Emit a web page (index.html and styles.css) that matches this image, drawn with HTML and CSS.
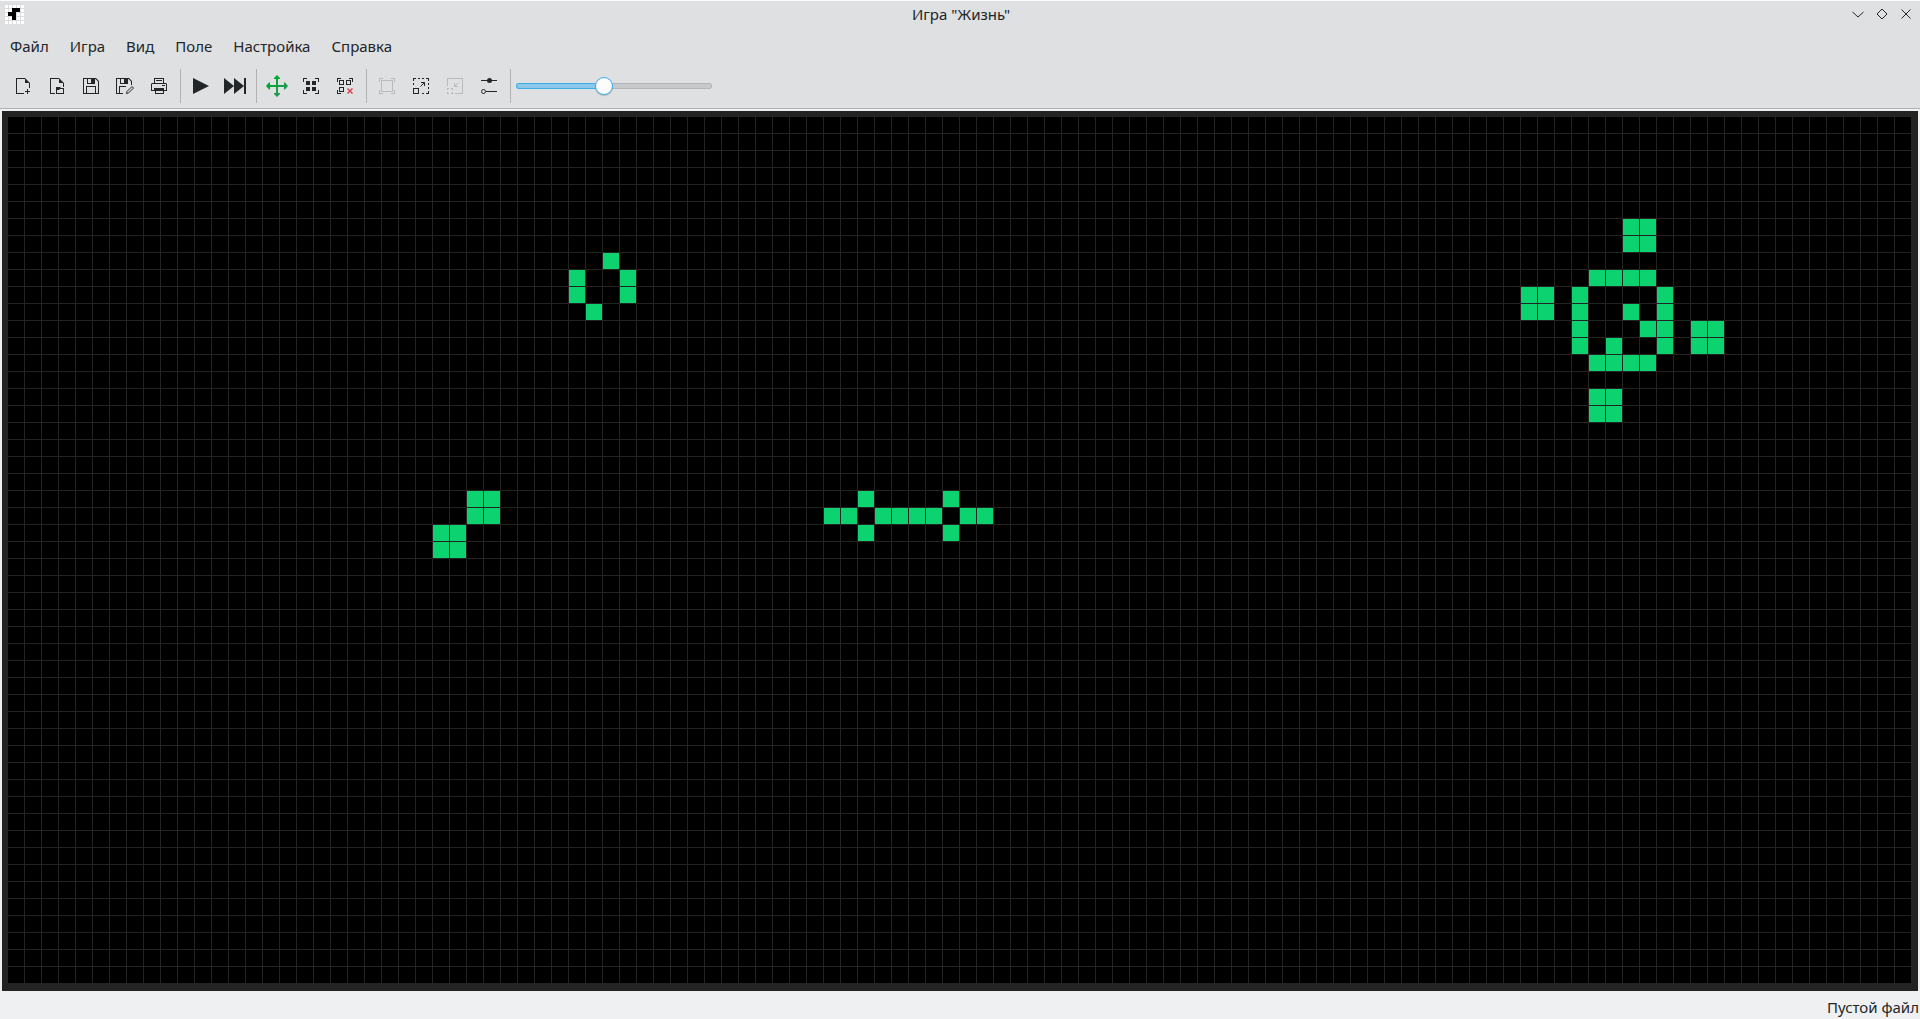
FILE: index.html
```html
<!DOCTYPE html>
<html lang="ru">
<head>
<meta charset="utf-8">
<title>Игра "Жизнь"</title>
<link rel="stylesheet" href="styles.css">
</head>
<body>
<header class="window-head">
  <div class="titlebar">
    <svg class="app-icon" viewBox="0 0 20 20" aria-hidden="true">
      <path fill="#fff" d="M0 0h20v20H0z"/>
      <path stroke="#dcdcdc" d="M.5 0v20M4.500 0v20M8.500 0v20M12.500 0v20M16.500 0v20M0 .5h20M0 4.500h20M0 8.500h20M0 12.500h20M0 16.500h20"/>
      <path fill="#000" d="M8 4h8v4h-4v8H8v-4H4V8h4z"/>
    </svg>
    <h1 class="title">Игра "Жизнь"</h1>
    <div class="window-buttons">
      <button class="window-button" aria-label="Свернуть"><svg viewBox="0 0 24 24"><path d="M6.500 10l5.500 5 5.500-5"/></svg></button>
      <button class="window-button" aria-label="Развернуть"><svg viewBox="0 0 24 24"><path d="M12 7l5 5-5 5-5-5z"/></svg></button>
      <button class="window-button" aria-label="Закрыть"><svg viewBox="0 0 24 24"><path d="M7.500 7.500l9 9M16.500 7.500l-9 9"/></svg></button>
    </div>
  </div>
  <nav class="menubar">
    <button class="menu">Файл</button>
    <button class="menu">Игра</button>
    <button class="menu">Вид</button>
    <button class="menu">Поле</button>
    <button class="menu">Настройка</button>
    <button class="menu">Справка</button>
  </nav>
  <div class="toolbar" role="toolbar">
    <div class="tools">
      <button class="tool" aria-label="Новый"><svg viewBox="0 0 22 22"><path d="M4 3h9l5 5v5h-1V8h-4V4H5v14h7v1H4zM15 14h1v2h2v1h-2v2h-1v-2h-2v-1h2z"/></svg></button>
      <button class="tool" aria-label="Открыть"><svg viewBox="0 0 22 22"><path d="M4 3h9l5 5v4h-1V8h-4V4H5v14h4v1H4zM10 12h4l1 1h3v6h-8zm1 3v3h6v-4h-3l-1 1z"/></svg></button>
      <button class="tool" aria-label="Сохранить"><svg viewBox="0 0 22 22"><path fill-rule="evenodd" d="M3 3h13l3 3v13H3zm1 1v14h2v-7h10v7h2V6.500L15.500 4H15v5H7V4zm4 0v4h3V4zm-1 8v6h8v-6z"/></svg></button>
      <button class="tool" aria-label="Сохранить как"><svg viewBox="0 0 22 22"><path fill-rule="evenodd" d="M2 3h13l3 3v4h-1V6.500L14.500 4H14v5H6V4H3v14h2v-7h7v1H6v6h3v1H2zm5 1v4h3V4z"/><path fill="none" stroke="#232629" d="M12.500 18.500l.5-2 5-5 1.500 1.500-5 5z"/></svg></button>
      <button class="tool" aria-label="Печать"><svg viewBox="0 0 22 22"><path fill-rule="evenodd" d="M6 3h10v5h2l1 1v7h-3v3H7v-3H3V9l1-1h2zm1 1v4h8V4zM4 9v6h2v-2h10v2h2V9zm4 7v2h7v-2z"/><path d="M8 5h6v1H8zM14 10h3v1h-3z"/></svg></button>
    </div>
    <div class="tools">
      <button class="tool" aria-label="Пуск"><svg viewBox="0 0 22 22"><path d="M3 3l16 8-16 8z"/></svg></button>
      <button class="tool" aria-label="Шаг"><svg viewBox="0 0 22 22"><path d="M0 3l10 8-10 8zM10 3l10 8-10 8zM20 3h2v16h-2z"/></svg></button>
    </div>
    <div class="tools">
      <button class="tool" aria-label="Перемещение"><svg viewBox="0 0 22 22"><defs><linearGradient id="move" x2="1" y2="1"><stop offset=".3" stop-color="#00a92e"/><stop offset=".7" stop-color="#229954"/></linearGradient></defs><path fill="url(#move)" d="M11 0l3 3v1h-2v6h6V7.500h1l3 3.500-3 3.500h-1V12h-6v6h2v1l-3 3-3-3v-1h2v-6H4v2.500H3L0 11l3-3.500h1V10h6V4H8V3z"/></svg></button>
      <button class="tool" aria-label="Выделить всё"><svg viewBox="0 0 22 22"><path d="M3 3h4v1H4v3H3zM15 3h4v4h-1V4h-3zM3 15h1v3h3v1H3zM18 15h1v4h-4v-1h3zM6 6h4v4H6zM12 6h4v4h-4zM6 12h4v4H6zM12 12h4v4h-4z"/></svg></button>
      <button class="tool" aria-label="Снять выделение"><svg viewBox="0 0 22 22"><path fill-rule="evenodd" d="M3 3h4v1H4v3H3zM15 3h4v4h-1V4h-3zM3 15h1v3h3v1H3zM5 5h5v5H5zm1 1v3h3V6zM12 5h5v5h-5zm1 1v3h3V6zM5 12h5v5H5zm1 1v3h3v-3z"/><path stroke="#da4453" stroke-width="1.500" d="M13.500 13.500l5 5M18.500 13.500l-5 5"/></svg></button>
    </div>
    <div class="tools">
      <button class="tool" disabled aria-label="Обрезать"><svg viewBox="0 0 22 22"><path fill-rule="evenodd" d="M3 3h4v1H4v3H3zM15 3h4v4h-1V4h-3zM3 15h1v3h3v1H3zM18 15h1v4h-4v-1h3zM5 5h12v12H5zm1 1v10h10V6z"/></svg></button>
      <button class="tool" aria-label="Увеличить"><svg viewBox="0 0 22 22"><path fill-rule="evenodd" d="M3 3h3v1H4v2H3zM8 3h2v1H8zM12 3h2v1h-2zM16 3h3v3h-1V4h-2zM3 8h1v2H3zM18 8h1v2h-1zM18 12h1v2h-1zM18 16h1v3h-3v-1h2zM12 18h2v1h-2zM3 13h6v6H3zm1 1v4h4v-4z"/><path fill="none" stroke="#232629" d="M10.500 11.500l4-4M11 7.500h3.500V11"/></svg></button>
      <button class="tool" disabled aria-label="Уменьшить"><svg viewBox="0 0 22 22"><path d="M3 3h16v16h-8v-1h7V4H4v7H3zM3 13h2v1H4v1H3zM7 13h2v2H8v-1H7zM3 17h1v1h1v1H3zM8 17h1v2H7v-1h1z"/><path fill="none" stroke="#232629" d="M14.500 7.500l-4 4M10.500 8v3.500H14"/></svg></button>
      <button class="tool" aria-label="Параметры"><svg viewBox="0 0 22 22"><path d="M3 5h16v1H3zM8 16h11v1H8z"/><circle cx="11.500" cy="5.500" r="2.500"/><circle cx="5.500" cy="16.500" r="2" fill="none" stroke="#232629"/></svg></button>
    </div>
    <div class="tools">
      <input class="speed" type="range" min="0" max="9" value="4" aria-label="Скорость">
    </div>
  </div>
</header>
<main class="workspace">
  <div class="frame">
    <div class="board">
      <svg class="cells" id="cells" role="img" aria-label="Игровое поле"></svg>
    </div>
  </div>
</main>
<footer class="statusbar">Пустой файл</footer>
<script src="board.js"></script>
</body>
</html>
```
FILE: styles.css
```css
* {
  box-sizing: border-box;
}

body {
  display: flex;
  flex-direction: column;
  min-height: 100vh;
  margin: 0;
  background: #eff0f1;
  color: #232629;
  font: 15px/20px "Noto Sans", sans-serif;
}

button {
  margin: 0;
  padding: 0;
  border: 0;
  background: none;
  color: inherit;
  font: inherit;
}

.window-head {
  border-top: 1px solid #fcfcfc;
  border-bottom: 1px solid #afb1b3;
  background: #dee0e2;
}

.titlebar {
  display: grid;
  grid-template-columns: 1fr auto 1fr;
  align-items: center;
  height: 26px;
  padding: 0 2px 0 4px;
}

.app-icon {
  width: 20px;
  height: 20px;
}

.title {
  margin: 0;
  font-size: 15px;
  font-weight: 400;
}

.window-buttons {
  display: flex;
  justify-content: flex-end;
}

.window-button {
  width: 24px;
  height: 24px;
}

.window-button svg {
  display: block;
  width: 24px;
  height: 24px;
  fill: none;
  stroke: #232629;
}

.menubar {
  display: flex;
  gap: 1px;
  height: 38px;
}

.menu {
  padding: 0 10px;
}

.toolbar {
  display: flex;
  padding: 4px 6px 5px;
}

.tools {
  display: flex;
  align-items: center;
}

.tools + .tools::before {
  content: "";
  width: 1px;
  height: 34px;
  margin: 0 3px 0 4px;
  background: #b0b2b4;
}

.tool {
  display: flex;
  align-items: center;
  justify-content: center;
  width: 34px;
  height: 34px;
}

.tool svg {
  width: 22px;
  height: 22px;
  fill: #232629;
}

.tool:disabled svg {
  opacity: 0.2;
}

.speed {
  width: 196px;
  height: 18px;
  margin: 0 2px;
  appearance: none;
  background: none;
}

.speed::-webkit-slider-runnable-track {
  height: 6px;
  border: 1px solid transparent;
  border-radius: 3px;
  background:
    linear-gradient(90deg, #8ec8e8 45%, #c8c9ca 45%) padding-box,
    linear-gradient(90deg, #3daee9 45%, #b3b5b6 45%) border-box;
}

.speed::-webkit-slider-thumb {
  width: 18px;
  height: 18px;
  margin-top: -7px;
  appearance: none;
  border: 1px solid #3daee9;
  border-radius: 50%;
  background: #fcfcfc;
  box-shadow: 0 1px 1px rgba(0, 0, 0, 0.2);
}

.workspace {
  display: flex;
  flex: 1;
  padding: 2px 2px 0;
}

.frame {
  display: flex;
  flex: 1;
  padding: 6px 7px 8px 6px;
  background: #232323;
}

.board {
  display: flex;
  flex: 1;
  background:
    linear-gradient(90deg, transparent 16px, #232323 16px) 0 0 / 17px 17px,
    linear-gradient(transparent 16px, #232323 16px) 0 0 / 17px 17px,
    #000;
}

.cells {
  flex: 1;
  width: 100%;
  min-height: 442px;
  fill: #0cd270;
}

.statusbar {
  height: 28px;
  padding: 6px 1px 2px;
  text-align: right;
}
```
FILE: board.js
```js
// Live cells of the field: row number -> column numbers.
const live = {
  6: [95, 96],
  7: [95, 96],
  8: [35],
  9: [33, 36, 93, 94, 95, 96],
  10: [33, 36, 89, 90, 92, 97],
  11: [34, 89, 90, 92, 95, 97],
  12: [92, 96, 97, 99, 100],
  13: [92, 94, 97, 99, 100],
  14: [93, 94, 95, 96],
  16: [93, 94],
  17: [93, 94],
  22: [27, 28, 50, 55],
  23: [27, 28, 48, 49, 51, 52, 53, 54, 56, 57],
  24: [25, 26, 50, 55],
  25: [25, 26]
};
const pitch = 17;
const board = document.getElementById("cells");
for (const [row, columns] of Object.entries(live)) {
  for (const column of columns) {
    const cell = document.createElementNS("http://www.w3.org/2000/svg", "rect");
    cell.setAttribute("x", column * pitch);
    cell.setAttribute("y", row * pitch);
    cell.setAttribute("width", pitch - 1);
    cell.setAttribute("height", pitch - 1);
    board.append(cell);
  }
}
```
